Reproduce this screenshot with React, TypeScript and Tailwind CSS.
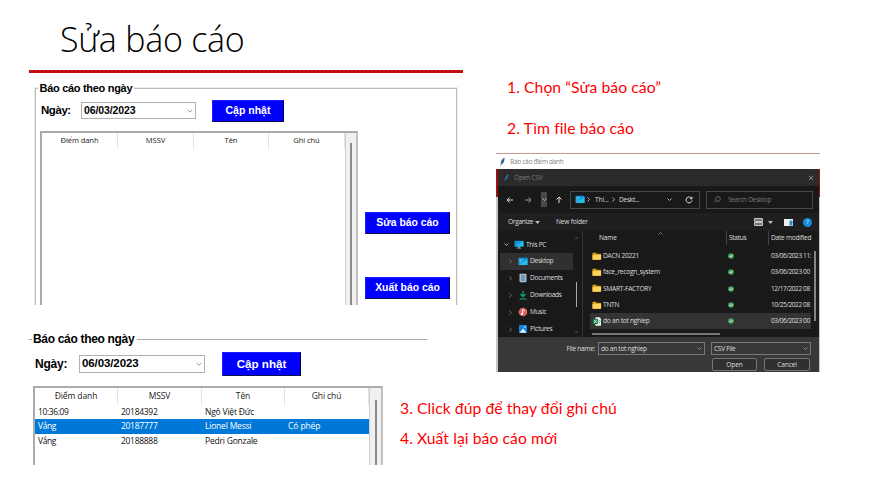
import React from "react";

const arial = "font-['Liberation_Sans',Arial,sans-serif] font-bold text-black whitespace-nowrap";
const segoe = "font-['Open_Sans','Noto_Sans',sans-serif] whitespace-nowrap";

function Chevron({ dir = "down", size = 6, className = "" }: { dir?: "down" | "right" | "up"; size?: number; className?: string }) {
  const d = { down: "M1 3l4 4 4-4", right: "M3 1l4 4-4 4", up: "M1 7l4-4 4 4" }[dir];
  return (
    <svg width={size} height={size} viewBox="0 0 10 10" fill="none" stroke="currentColor" strokeWidth="1.5" className={`shrink-0 ${className}`}>
      <path d={d} />
    </svg>
  );
}

function BlueButton({ children, className }: { children: React.ReactNode; className: string }) {
  return (
    <button className={`${arial} flex shrink-0 items-center justify-center border border-t-[#2020ff] border-l-[#2020ff] border-r-[#000040] border-b-[#101050] bg-[#0000ff] !text-white ${className}`}>
      {children}
    </button>
  );
}

function DateSelect({ className }: { className: string }) {
  return (
    <div className={`${arial} flex items-center justify-between border border-[#b0b0b0] bg-white pl-[2px] pr-[2px] ${className}`}>
      <span>06/03/2023</span>
      <Chevron size={6} className="text-[#8a8a8a]" />
    </div>
  );
}

function HeadCell({ children, className }: { children: React.ReactNode; className: string }) {
  return <div className={`flex shrink-0 items-center justify-center border-r border-[#e2e2e2] text-[#222] ${className}`}>{children}</div>;
}

function ReportTop() {
  return (
    <section className="ml-[29px] mt-[7px] h-[225px] w-[434px] overflow-hidden pl-[6px] pt-[8px]">
      <div className="h-[240px] w-[422px] border border-[#bcbcbc] shadow-[0_0_0_1px_#ececec]">
        <div className={`${arial} -mt-[8px] ml-[2px] h-[14px] w-[96px] bg-white pl-[1.5px] text-[11px] leading-[14px] tracking-[-0.3px]`}>Báo cáo theo ngày</div>
        <div className="mt-[5px] flex h-[21px] items-center pl-[5px]">
          <span className={`${arial} w-[40px] text-[11.5px] tracking-[-0.45px]`}>Ngày:</span>
          <DateSelect className="h-[17px] w-[115px] text-[10.5px] tracking-[-0.1px]" />
          <BlueButton className="ml-[16px] h-[22px] w-[72px] text-[10.5px]">Cập nhật</BlueButton>
        </div>
        <div className="flex">
          <div className="ml-[4px] mt-[10px] flex h-[190px] w-[318px] border-2 border-[#a9abb0] border-r-[#c0c0c0]">
            <div className={`${segoe} flex h-[16px] w-[303px] text-[7.6px] tracking-[-0.1px]`}>
              <HeadCell className="w-[76px]">Điểm danh</HeadCell>
              <HeadCell className="w-[76px]">MSSV</HeadCell>
              <HeadCell className="w-[75px]">Tên</HeadCell>
              <HeadCell className="w-[76px]">Ghi chú</HeadCell>
            </div>
            <div className="flex w-[12px] justify-center border-l border-[#cfcfcf] bg-[#f0f0f0] pt-[10px]">
              <div className="w-[2px] bg-[#8a8a8a]" />
            </div>
          </div>
          <div className="ml-[7px] mt-[91px] flex flex-col gap-[43px]">
            <BlueButton className="h-[22px] w-[85px] text-[10.4px]">Sửa báo cáo</BlueButton>
            <BlueButton className="h-[22px] w-[85px] text-[10.4px]">Xuất báo cáo</BlueButton>
          </div>
        </div>
      </div>
    </section>
  );
}

const records = [
  ["10:36:09", "20184392", "Ngô Việt Đức", ""],
  ["Vắng", "20187777", "Lionel Messi", "Có phép"],
  ["Vắng", "20188888", "Pedri Gonzale", ""],
];

function ReportBottom() {
  return (
    <section className="ml-[29px] mt-[27px] h-[133px] w-[398px] overflow-hidden">
      <div className="flex h-[14px] items-center">
        <span className="h-px w-[3px] bg-[#aaa]" />
        <span className={`${arial} w-[105px] pl-[1px] text-[12px] tracking-[-0.32px]`}>Báo cáo theo ngày</span>
        <span className="h-px flex-1 bg-[#aaa]" />
      </div>
      <div className="mt-[6px] flex h-[24px] items-center pl-[6px]">
        <span className={`${arial} w-[44px] text-[12px] tracking-[-0.2px]`}>Ngày:</span>
        <DateSelect className="h-[18px] w-[126px] text-[11.5px] tracking-[-0.1px]" />
        <BlueButton className="ml-[17px] h-[24px] w-[79px] text-[11.6px]">Cập nhật</BlueButton>
      </div>
      <div className="ml-[4px] mt-[10px] flex h-[90px] w-[350px] border-2 border-[#a9abb0] border-r-[#c0c0c0]">
        <div className={`${segoe} w-[334px] shrink-0 text-[8.5px]`}>
          <div className="flex h-[17px] tracking-[-0.1px]">
            <HeadCell className="w-[83px]">Điểm danh</HeadCell>
            <HeadCell className="w-[84px]">MSSV</HeadCell>
            <HeadCell className="w-[83px]">Tên</HeadCell>
            <HeadCell className="w-[84px]">Ghi chú</HeadCell>
          </div>
          {records.map((r, i) => (
            <div key={r[1]} className={`flex h-[14.4px] items-center pl-[3px] ${i === 1 ? "bg-[#0078d7] text-white" : "text-[#111]"}`}>
              <span className="w-[83px] tracking-[-0.4px]">{r[0]}</span>
              <span className="w-[84px] tracking-[-0.3px]">{r[1]}</span>
              <span className="w-[83px] tracking-[-0.2px]">{r[2]}</span>
              <span className="tracking-[-0.1px]">{r[3]}</span>
            </div>
          ))}
        </div>
        <div className="flex w-[12px] justify-center border-l border-[#cfcfcf] bg-[#f0f0f0] pt-[12px]">
          <div className="w-[2px] bg-[#8a8a8a]" />
        </div>
      </div>
    </section>
  );
}

function Feather({ className = "" }: { className?: string }) {
  return (
    <svg width="7" height="10" viewBox="0 0 7 10" className={`shrink-0 ${className}`}>
      <path d="M5.4 .8C3.2 1.8 1.6 4.2 1.8 7L1.4 9.2l1-1.8C4.8 6.2 5.7 3.8 5.4 .8Z" fill="#1c4a7c" />
      <path d="M4.8 1.8L2.2 7.2" stroke="#6fa8d8" strokeWidth=".5" />
    </svg>
  );
}

function Monitor({ stand = false }: { stand?: boolean }) {
  return (
    <svg width="10" height="9" viewBox="0 0 10 9" className="shrink-0">
      <rect x=".5" y=".8" width="9" height={stand ? 5.8 : 7.2} rx=".7" fill="#1295d8" />
      <path d={stand ? "M.5 6.6L9.5 1v5.6Z" : "M.5 8L9.5 2v6Z"} fill="#28bde8" />
      {stand ? <path d="M4.3 6.6h1.4v1.2h1.6v.7H2.7v-.7h1.6Z" fill="#7fb9d7" /> : <path d="M1.7 2.5h1.2v1H1.7zM1.7 4.5h1.2v1H1.7zM3.7 2.5h1.1v1H3.7z" fill="#b9f2ff" />}
    </svg>
  );
}

function SideIcon({ name }: { name: string }) {
  if (name === "Desktop") return <Monitor />;
  return (
    <svg width="10" height="10" viewBox="0 0 10 10" className="shrink-0">
      {name === "Documents" && (
        <>
          <rect x="1.5" y=".8" width="7" height="8.4" rx=".7" fill="#a8c0d6" />
          <path d="M3 3h4M3 5h4M3 7h4" stroke="#3e617e" strokeWidth=".9" />
        </>
      )}
      {name === "Downloads" && <path d="M5 .8v5.6M2.4 4L5 6.6 7.6 4M1.5 9h7" stroke="#15a886" strokeWidth="1.2" fill="none" />}
      {name === "Music" && (
        <>
          <circle cx="5" cy="5" r="4.3" fill="#df6262" />
          <path d="M4.6 7V2.7L6.8 3.8" stroke="#fff" strokeWidth=".9" fill="none" />
          <circle cx="3.9" cy="7" r="1" fill="#fff" />
        </>
      )}
      {name === "Pictures" && (
        <>
          <rect x="1" y="1" width="8" height="8" rx=".8" fill="#1683d8" />
          <path d="M1.6 8.8L5 4.6l3.5 4.2Z" fill="#e2f4ff" />
          <circle cx="7" cy="3" r=".8" fill="#fff" />
        </>
      )}
    </svg>
  );
}

function FileIcon({ csv }: { csv: boolean }) {
  return (
    <svg width="10" height="9" viewBox="0 0 10 9" className="shrink-0">
      {csv ? (
        <>
          <path d="M3.4 .2h4.2L9 1.8v7H3.4Z" fill="#e7efe9" />
          <rect x=".9" y="1.9" width="5" height="5.2" fill="#16834b" />
          <path d="M2.2 3.1l2.3 2.8M4.5 3.1L2.2 5.9" stroke="#fff" strokeWidth=".8" />
          <path d="M6.6 3.6h1.6M6.6 5.6h1.6" stroke="#2a9a5f" strokeWidth=".8" />
        </>
      ) : (
        <>
          <path d="M.5 1.3Q.5 .8 1.1 .8h2.5l1 1h4q.5 0 .5.6V7.3q0 .5-.6.5H1.1q-.6 0-.6-.5Z" fill="#e3a51d" />
          <path d="M.5 3h8.6v4.3q0 .5-.6.5H1.1q-.6 0-.6-.5Z" fill="#ffd35b" />
        </>
      )}
    </svg>
  );
}

const files = [
  ["DACN 20221", "03/06/2023 11:"],
  ["face_recogn_system", "03/06/2023 00"],
  ["SMART-FACTORY", "12/17/2022 08"],
  ["TNTN", "10/25/2022 08"],
  ["do an tot nghiep", "03/06/2023 00"],
];

function NavArrow({ d, className = "" }: { d: string; className?: string }) {
  return (
    <svg width="8" height="8" viewBox="0 0 8 8" fill="none" stroke="currentColor" strokeWidth="1" className={`shrink-0 ${className}`}>
      <path d={d} />
    </svg>
  );
}

function FileDialog() {
  return (
    <section className={`${segoe} mt-[15px] h-[219px] w-[324px] overflow-hidden border-t border-[#c9968f] bg-white text-[6.6px] leading-[8px] tracking-[-0.15px] text-[#dedede]`}>
      <div className="flex h-[15px] items-center gap-[4px] pl-[3px] text-[#858585]">
        <Feather />
        <span className="tracking-[-0.33px]">Báo cáo điểm danh</span>
      </div>
      <div className="h-[203px] bg-[linear-gradient(#9c1010_28px,#c5c5c5_28px)] pl-[2px] pr-px">
        <div className="flex h-[203px] flex-col overflow-hidden rounded-t-[4px] bg-[#191919]">
          <div className="flex h-[17px] shrink-0 items-center bg-[#2b2b2b] pl-[5px] pr-[4px] text-[#777]">
            <Feather />
            <span className="ml-[4px] flex-1 tracking-[-0.25px]">Open CSV</span>
            <NavArrow d="M1.8 1.8l4.4 4.4M6.2 1.8l-4.4 4.4" className="text-[#888]" />
          </div>
          <div className="flex h-[27px] shrink-0 items-center pl-[8px]">
            <NavArrow d="M7 4H1M3.5 1.5L1 4l2.5 2.5" />
            <NavArrow d="M1 4H7M4.5 1.5L7 4 4.5 6.5" className="ml-[10px] text-[#999]" />
            <div className="ml-[9px] flex h-[15px] w-[6px] items-center justify-center bg-[#484848]"><Chevron size={5} /></div>
            <NavArrow d="M4 7V1M1.5 3.5L4 1l2.5 2.5" className="ml-[8px]" />
            <div className="ml-[7px] flex h-[18px] w-[130px] items-center border border-[#484848] pl-[4px]">
              <Monitor />
              <Chevron dir="right" size={5} className="ml-[1px]" />
              <span className="ml-[4px] w-[13px]">Thi...</span>
              <Chevron dir="right" size={5} className="ml-[3px]" />
              <span className="ml-[3px] w-[48px] tracking-[-0.3px]">Deskt...</span>
              <Chevron size={5} />
              <svg width="8" height="8" viewBox="0 0 8 8" fill="none" stroke="currentColor" className="ml-[13px]">
                <path d="M6.7 2.5A3 3 0 1 0 7 4.5M7 .8v2H5" />
              </svg>
            </div>
            <div className="ml-[6px] flex h-[18px] w-[107px] items-center border border-[#484848] pl-[7px] text-[#777]">
              <svg width="7" height="7" viewBox="0 0 7 7" fill="none" stroke="currentColor" strokeWidth=".8"><circle cx="4" cy="3" r="2.3" /><path d="M2.3 4.7L.5 6.5" /></svg>
              <span className="ml-[7px] tracking-[-0.35px]">Search Desktop</span>
            </div>
          </div>
          <div className="flex h-[18px] shrink-0 items-center bg-[#1f1f1f] pl-[10px]">
            <span className="w-[27px] tracking-[-0.3px]">Organize</span>
            <svg width="5" height="3"><path d="M0 0h5L2.5 3Z" fill="#bbb" /></svg>
            <span className="ml-[16px] flex-1 tracking-[-0.2px]">New folder</span>
            <svg width="9" height="8" className="mr-[5px]"><path d="M.5 .5h8v3h-8ZM.5 4.5h8v3h-8Z" fill="#777" stroke="#c4c4c4" /></svg>
            <svg width="5" height="3" className="mr-[11px]"><path d="M0 0h5L2.5 3Z" fill="#bbb" /></svg>
            <svg width="9" height="7" className="mr-[10px]"><path d="M0 0h9v7H0Z" fill="#eee" /><path d="M5.5 1.5H8.5V6.5H5.5Z" fill="#238fd3" /></svg>
            <span className="mr-[7px] flex size-[9px] items-center justify-center rounded-full bg-[#168bdb] text-[6px] text-white">?</span>
          </div>
          <div className="flex h-[106px] shrink-0">
            <div className="flex w-[85px] border-r border-[#353535] pt-[5px]">
              <div className="w-[75px]">
                <div className="flex h-[17px] items-center pl-[6px]">
                  <Chevron size={5} className="mr-[5px]" />
                  <Monitor stand />
                  <span className="ml-[2px] tracking-[-0.3px]">This PC</span>
                </div>
                {["Desktop", "Documents", "Downloads", "Music", "Pictures"].map((name, i) => (
                  <div key={name} className={`ml-[2px] flex h-[16.9px] items-center pl-[8px] ${i === 0 ? "bg-[#303030]" : ""}`}>
                    <Chevron dir="right" size={5} className="mr-[5px] text-[#888]" />
                    <SideIcon name={name} />
                    <span className="ml-[2px] tracking-[-0.3px]">{name}</span>
                  </div>
                ))}
              </div>
              <div className="-ml-px flex w-[9px] flex-col items-center">
                <svg width="5" height="3"><path d="M0 3h5L2.5 0Z" fill="#333" /></svg>
                <div className="mt-[43px] h-[25px] w-px bg-[#aaa]" />
                <svg width="5" height="3" className="mt-[24px]"><path d="M0 0h5L2.5 3Z" fill="#333" /></svg>
              </div>
            </div>
            <div className="w-[229px] pl-[7px]">
              <div className="flex h-[17px] items-start">
                <div className="flex h-[14px] w-[136px] items-center pl-[9px]">
                  <span className="w-[59px]">Name</span>
                  <Chevron dir="up" size={5} className="mb-[10px] text-[#999]" />
                </div>
                <span className="flex h-[14px] w-[42px] items-center border-l border-[#444] pl-[2px] tracking-[-0.3px]">Status</span>
                <span className="flex h-[14px] items-center border-l border-[#444] pl-[2px] tracking-[-0.25px]">Date modified</span>
              </div>
              {files.map((f, i) => (
                <div key={f[0]} className={`flex h-[16.3px] w-[221px] items-center pl-[2px] ${i === 4 ? "bg-[#333]" : ""}`}>
                  <FileIcon csv={i === 4} />
                  <span className="ml-[1px] w-[125px] tracking-[-0.25px]">{f[0]}</span>
                  <svg width="6" height="6" viewBox="0 0 6 6" className="shrink-0"><circle cx="3" cy="3" r="2.8" fill="#4da765" /><path d="M1.5 3l1 1 2-2" fill="none" stroke="#fff" strokeWidth=".8" /></svg>
                  <span className="ml-[37px] w-[40px] shrink-0 tracking-[-0.42px]">{f[1]}</span>
                </div>
              ))}
              <div className="ml-[2px] mt-[4px] h-[2px] w-[128px] bg-[#777]" />
            </div>
            <div className="ml-[2px] mt-[20px] h-[70px] w-[2px] bg-[#858585]" />
          </div>
          <div className="flex-1 bg-[#383838] pt-[5px]">
            <div className="flex h-[13px] items-center">
              <span className="w-[100px] pr-[3px] text-right tracking-[-0.3px]">File name:</span>
              <div className="flex h-[13px] w-[107px] items-center justify-between border border-[#777] pl-[2px] pr-[2px]"><span className="tracking-[-0.3px]">do an tot nghiep</span><Chevron size={5} className="text-[#aaa]" /></div>
              <div className="ml-[6px] flex h-[13px] w-[100px] items-center justify-between border border-[#777] pl-[2px] pr-[2px]"><span className="tracking-[-0.3px]">CSV File</span><Chevron size={5} className="text-[#aaa]" /></div>
            </div>
            <div className="mt-[3px] flex gap-[7px] pl-[214px]">
              <button className="h-[13px] w-[45px] rounded-[2px] border border-[#777] bg-[#303030]">Open</button>
              <button className="h-[13px] w-[46px] rounded-[2px] border border-[#777] bg-[#303030]">Cancel</button>
            </div>
          </div>
        </div>
      </div>
    </section>
  );
}

const note = "font-['Lato','Open_Sans',sans-serif] whitespace-nowrap text-[15.7px] leading-[20px] tracking-[0.07px] text-[#ff0000]";

export default function App() {
  return (
    <main className="flex h-[482px] w-[889px] overflow-hidden bg-white">
      <div className="w-[496px] shrink-0">
        <h1 className="h-[70px] whitespace-nowrap pl-[60px] pt-[17px] font-['Open_Sans','Noto_Sans',sans-serif] text-[34px] font-[340] leading-[44px] tracking-[-0.25px] text-black">Sửa báo cáo</h1>
        <div className="ml-[29px] h-[3px] w-[434px] bg-[repeating-linear-gradient(90deg,#b80d10_0_2px,#d31115_2px_4px)]" />
        <ReportTop />
        <ReportBottom />
      </div>
      <div className="w-[393px] pt-[77px]">
        <p className={`${note} pl-[11px]`}>1. Chọn “Sửa báo cáo”</p>
        <p className={`${note} mt-[21px] pl-[11px]`}>2. Tìm file báo cáo</p>
        <FileDialog />
        <p className={`${note} -ml-[96px] mt-[26px]`}>3. Click đúp để thay đổi ghi chú</p>
        <p className={`${note} -ml-[96px] mt-[10px]`}>4. Xuất lại báo cáo mới</p>
      </div>
    </main>
  );
}
